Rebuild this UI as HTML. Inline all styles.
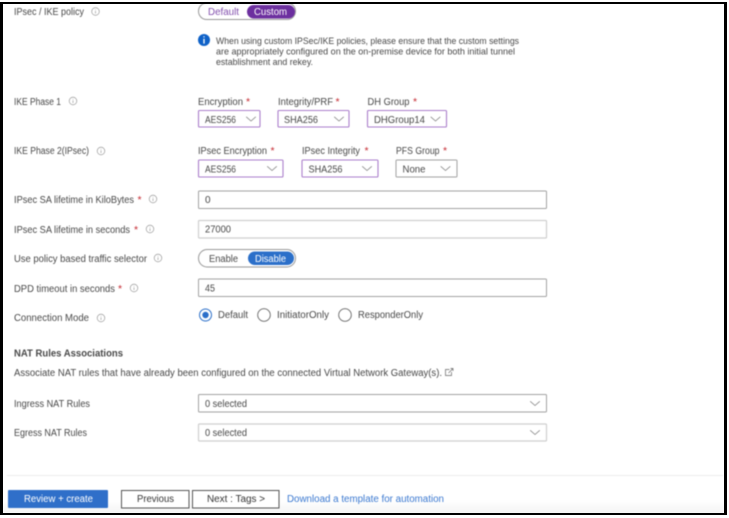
<!DOCTYPE html>
<html lang="en">
<head>
<meta charset="utf-8">
<title>IPsec / IKE policy</title>
<style>
html,body{margin:0;padding:0;width:729px;height:518px;overflow:hidden;background:#fff;position:relative}
svg{display:block;filter:blur(.45px)}
text{font-family:"Liberation Sans",sans-serif;font-size:10px;fill:#484848}
.r{fill:#c4262e;font-size:10.500px}
.chev{fill:none;stroke:#808080;stroke-width:.7}
.sel{fill:#fff;stroke:#ab7fcb;stroke-width:1.100}
.inp{fill:#fff;stroke:#a2a2a2;stroke-width:1}
.inp2{fill:#fff;stroke:#cfcfcf;stroke-width:1.200}
.ic{fill:none;stroke:#8a8a8a;stroke-width:.6}
.tg{fill:#fff;stroke:#999;stroke-width:1}
.rad{fill:#fff;stroke:#666;stroke-width:.9}
.f{position:absolute;background:#000}
</style>
</head>
<body>
<svg width="729" height="518" viewBox="0 0 729 518" xmlns="http://www.w3.org/2000/svg">
<defs>
<linearGradient id="g" x1="0" y1="0" x2="0" y2="1"><stop offset="0" stop-color="#fff"/><stop offset="1" stop-color="#f4f4f4"/></linearGradient>
<g id="i"><circle r="3.800" class="ic"/><path d="M0-.6V2M0-2.100V-1.500" class="ic"/></g>
<path id="c" d="M-4.800-2.200L0 2L4.800-2.200" class="chev"/>
</defs>
<rect width="729" height="518" fill="#fff"/>
<rect x="3" y="500" width="721" height="13" fill="url(#g)"/>

<!-- IPsec / IKE policy -->
<text x="14" y="15" textLength="70" lengthAdjust="spacingAndGlyphs">IPsec / IKE policy</text>
<use href="#i" x="95.500" y="11.500"/>
<rect x="198.500" y="3" width="97" height="16.500" rx="8.200" class="tg"/>
<rect x="247" y="5" width="48" height="13.500" rx="6.700" fill="#6c2f9f"/>
<text x="208" y="15" textLength="31" lengthAdjust="spacingAndGlyphs" style="fill:#8350ae">Default</text>
<text x="254" y="15" textLength="33" lengthAdjust="spacingAndGlyphs" style="fill:#fff">Custom</text>
<circle cx="204" cy="40" r="6" fill="#0f62c8"/>
<path d="M204 38.800V43.600M204 36.200V37.400" stroke="#fff" stroke-width="1.300" fill="none"/>
<text x="216" y="44" textLength="303" lengthAdjust="spacingAndGlyphs" style="font-size:9.300px">When using custom IPSec/IKE policies, please ensure that the custom settings</text>
<text x="216" y="54.500" textLength="299" lengthAdjust="spacingAndGlyphs" style="font-size:9.300px">are appropriately configured on the on-premise device for both initial tunnel</text>
<text x="216" y="65" textLength="97" lengthAdjust="spacingAndGlyphs" style="font-size:9.300px">establishment and rekey.</text>

<!-- IKE Phase 1 -->
<text x="14" y="105" textLength="47" lengthAdjust="spacingAndGlyphs">IKE Phase 1</text>
<use href="#i" x="73" y="101"/>
<text x="198" y="105" textLength="45" lengthAdjust="spacingAndGlyphs">Encryption</text><text x="246" y="105" class="r">*</text>
<text x="278" y="105" textLength="55" lengthAdjust="spacingAndGlyphs">Integrity/PRF</text><text x="335.500" y="105" class="r">*</text>
<text x="367.500" y="105" textLength="42" lengthAdjust="spacingAndGlyphs">DH Group</text><text x="413" y="105" class="r">*</text>
<rect x="198.500" y="110.500" width="61.500" height="16.500" rx="1" class="sel"/>
<text x="205" y="123" textLength="31" lengthAdjust="spacingAndGlyphs">AES256</text>
<use href="#c" x="251" y="119"/>
<rect x="278" y="110.500" width="71" height="16.500" rx="1" class="sel"/>
<text x="284" y="123" textLength="34" lengthAdjust="spacingAndGlyphs">SHA256</text>
<use href="#c" x="339" y="119"/>
<rect x="367.500" y="110.500" width="79" height="16.500" rx="1" class="sel"/>
<text x="374" y="123" textLength="51" lengthAdjust="spacingAndGlyphs">DHGroup14</text>
<use href="#c" x="435.500" y="119"/>

<!-- IKE Phase 2 -->
<text x="14" y="154" textLength="75" lengthAdjust="spacingAndGlyphs">IKE Phase 2(IPsec)</text>
<use href="#i" x="101" y="151"/>
<text x="198" y="154" textLength="69" lengthAdjust="spacingAndGlyphs">IPsec Encryption</text><text x="270.500" y="154" class="r">*</text>
<text x="302" y="154" textLength="58" lengthAdjust="spacingAndGlyphs">IPsec Integrity</text><text x="364.500" y="154" class="r">*</text>
<text x="396" y="154" textLength="43.500" lengthAdjust="spacingAndGlyphs">PFS Group</text><text x="443" y="154" class="r">*</text>
<rect x="198.500" y="160" width="84.500" height="17" rx="1" class="sel"/>
<text x="205" y="172.500" textLength="31" lengthAdjust="spacingAndGlyphs">AES256</text>
<use href="#c" x="272" y="168.500"/>
<rect x="302" y="160" width="76" height="17" rx="1" class="sel"/>
<text x="308.500" y="172.500" textLength="34" lengthAdjust="spacingAndGlyphs">SHA256</text>
<use href="#c" x="367" y="168.500"/>
<rect x="396" y="160" width="61" height="17" rx="1" class="inp"/>
<text x="402.500" y="172.500" textLength="23" lengthAdjust="spacingAndGlyphs">None</text>
<use href="#c" x="445.500" y="168.500"/>

<!-- Lifetime -->
<text x="14" y="203" textLength="120" lengthAdjust="spacingAndGlyphs">IPsec SA lifetime in KiloBytes</text><text x="137.500" y="203" class="r">*</text>
<use href="#i" x="153" y="199"/>
<rect x="198.500" y="191" width="348" height="17.500" rx="1" class="inp"/>
<text x="205" y="203">0</text>
<text x="14" y="233" textLength="116" lengthAdjust="spacingAndGlyphs">IPsec SA lifetime in seconds</text><text x="134" y="233" class="r">*</text>
<use href="#i" x="150" y="229"/>
<rect x="198.500" y="220.500" width="348" height="17.500" rx="1" class="inp2"/>
<text x="205" y="232.500" textLength="26" lengthAdjust="spacingAndGlyphs">27000</text>

<!-- Policy selector -->
<text x="14" y="262" textLength="133" lengthAdjust="spacingAndGlyphs">Use policy based traffic selector</text>
<use href="#i" x="158" y="258"/>
<rect x="198.500" y="249.500" width="97" height="17.500" rx="8.700" class="tg"/>
<rect x="248" y="251.500" width="46" height="13.500" rx="6.700" fill="#2b6fc9"/>
<text x="209" y="262" textLength="29" lengthAdjust="spacingAndGlyphs">Enable</text>
<text x="255" y="262" textLength="31" lengthAdjust="spacingAndGlyphs" style="fill:#fff">Disable</text>

<!-- DPD -->
<text x="14" y="292" textLength="101" lengthAdjust="spacingAndGlyphs">DPD timeout in seconds</text><text x="118" y="292" class="r">*</text>
<use href="#i" x="134" y="288"/>
<rect x="198.500" y="279" width="348" height="17.500" rx="1" class="inp"/>
<text x="205" y="291.500" textLength="10" lengthAdjust="spacingAndGlyphs">45</text>

<!-- Connection mode -->
<text x="14" y="321" textLength="75" lengthAdjust="spacingAndGlyphs">Connection Mode</text>
<use href="#i" x="101" y="318"/>
<circle cx="205.500" cy="315" r="6" fill="#fff" stroke="#2b6fc9"/>
<circle cx="205.500" cy="315" r="3.200" fill="#2b6fc9"/>
<text x="218" y="318" textLength="30" lengthAdjust="spacingAndGlyphs">Default</text>
<circle cx="264" cy="315" r="6.300" class="rad"/>
<text x="277" y="318" textLength="52" lengthAdjust="spacingAndGlyphs">InitiatorOnly</text>
<circle cx="345" cy="315" r="6.300" class="rad"/>
<text x="358" y="318" textLength="65" lengthAdjust="spacingAndGlyphs">ResponderOnly</text>

<!-- NAT -->
<text x="14" y="356.500" textLength="109" lengthAdjust="spacingAndGlyphs" style="font-weight:700">NAT Rules Associations</text>
<text x="14" y="376" textLength="428" lengthAdjust="spacingAndGlyphs">Associate NAT rules that have already been configured on the connected Virtual Network Gateway(s).</text>
<path d="M449.500 369.500H445.500V375.500H451.500V372M448.500 373L453 368.500M450.500 368.500H453V371" fill="none" stroke="#666" stroke-width=".7"/>
<text x="14" y="407" textLength="76" lengthAdjust="spacingAndGlyphs">Ingress NAT Rules</text>
<rect x="198.500" y="394.500" width="348" height="17.500" rx="1" class="inp"/>
<text x="205" y="407" textLength="42" lengthAdjust="spacingAndGlyphs">0 selected</text>
<use href="#c" x="535" y="403.500"/>
<text x="14" y="436" textLength="73" lengthAdjust="spacingAndGlyphs">Egress NAT Rules</text>
<rect x="198.500" y="424" width="348" height="17" rx="1" class="inp2"/>
<text x="205" y="436" textLength="42" lengthAdjust="spacingAndGlyphs">0 selected</text>
<use href="#c" x="535" y="432.500"/>

<!-- Footer -->
<rect x="7" y="475" width="716" height="1" fill="#ececec"/>
<rect x="8" y="490" width="100" height="18" rx="1" fill="#2f6fc9"/>
<text x="24" y="502" textLength="69" lengthAdjust="spacingAndGlyphs" style="fill:#fff">Review + create</text>
<rect x="121.500" y="490.500" width="67.500" height="17.500" class="tg" style="stroke:#555"/>
<text x="137" y="502" textLength="37" lengthAdjust="spacingAndGlyphs" style="fill:#333">Previous</text>
<rect x="192.500" y="490.500" width="86.500" height="17.500" class="tg" style="stroke:#555"/>
<text x="207" y="502" textLength="58" lengthAdjust="spacingAndGlyphs" style="fill:#333">Next : Tags &gt;</text>
<text x="287" y="502" textLength="157" lengthAdjust="spacingAndGlyphs" style="fill:#3a78d0">Download a template for automation</text>
</svg>
<!-- Outer frame -->
<div class="f" style="left:0;top:2px;width:727px;height:2px"></div>
<div class="f" style="left:0;top:2px;width:3px;height:513px"></div>
<div class="f" style="left:724px;top:2px;width:3px;height:513px"></div>
<div class="f" style="left:0;top:513px;width:727px;height:2px"></div>
</body>
</html>
